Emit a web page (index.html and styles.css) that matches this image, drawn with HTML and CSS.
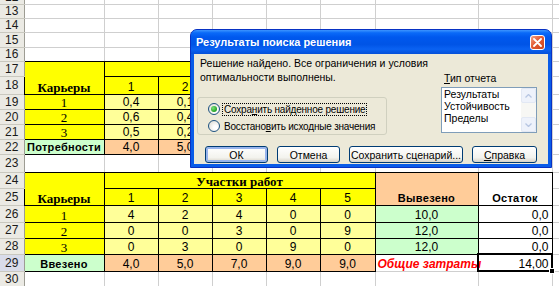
FILE: index.html
```html
<!DOCTYPE html>
<html lang="ru">
<head>
    <meta charset="UTF-8">
    <title>Поиск решения</title>
    <link rel="stylesheet" href="styles.css">
</head>
<body>
<div class="screen">
    <table class="sheet">
        <colgroup>
            <col class="c-hdr"><col class="c-a"><col class="c-n"><col class="c-n"><col class="c-n"><col class="c-n"><col class="c-f"><col class="c-g"><col class="c-h"><col class="c-i">
        </colgroup>
        <tr class="h4"><th><span class="cut">12</span></th><td></td><td></td><td></td><td></td><td></td><td></td><td></td><td></td><td></td></tr>
        <tr class="h14"><th>13</th><td></td><td></td><td></td><td></td><td></td><td></td><td></td><td></td><td></td></tr>
        <tr class="h14"><th>14</th><td></td><td></td><td></td><td></td><td></td><td></td><td></td><td></td><td></td></tr>
        <tr class="h15"><th>15</th><td></td><td></td><td></td><td></td><td></td><td></td><td></td><td></td><td></td></tr>
        <tr class="h14"><th>16</th><td></td><td></td><td></td><td></td><td></td><td></td><td></td><td></td><td></td></tr>
        <tr class="h15"><th>17</th><td class="t yel bs" rowspan="2">Карьеры</td><td class="t yel" colspan="5"></td><td></td><td></td><td></td></tr>
        <tr class="h18"><th>18</th><td class="t yel">1</td><td class="t yel">2</td><td class="t yel"></td><td class="t yel"></td><td class="t yel"></td><td></td><td></td><td></td></tr>
        <tr class="h15"><th>19</th><td class="t yel serif">1</td><td class="t ly">0,4</td><td class="t ly">0,1</td><td class="t ly"></td><td class="t ly"></td><td class="t ly"></td><td></td><td></td><td></td></tr>
        <tr class="h15"><th>20</th><td class="t yel serif">2</td><td class="t ly">0,6</td><td class="t ly">0,4</td><td class="t ly"></td><td class="t ly"></td><td class="t ly"></td><td></td><td></td><td></td></tr>
        <tr class="h15"><th>21</th><td class="t yel serif">3</td><td class="t ly">0,5</td><td class="t ly">0,2</td><td class="t ly"></td><td class="t ly"></td><td class="t ly"></td><td></td><td></td><td></td></tr>
        <tr class="h15"><th>22</th><td class="t grn lab">Потребности</td><td class="t org">4,0</td><td class="t org">5,0</td><td class="t org"></td><td class="t org"></td><td class="t org"></td><td></td><td></td><td></td></tr>
        <tr class="h18"><th>23</th><td></td><td></td><td></td><td></td><td></td><td></td><td></td><td></td><td></td></tr>
        <tr class="h16"><th>24</th><td class="t yel bs" rowspan="2">Карьеры</td><td class="t yel bs" colspan="5">Участки работ</td><td class="t org lab" rowspan="2">Вывезено</td><td class="t lab" rowspan="2">Остаток</td><td></td></tr>
        <tr class="h17"><th>25</th><td class="t yel">1</td><td class="t yel">2</td><td class="t yel">3</td><td class="t yel">4</td><td class="t yel">5</td><td></td></tr>
        <tr class="h17"><th>26</th><td class="t yel serif">1</td><td class="t ly">4</td><td class="t ly">2</td><td class="t ly">4</td><td class="t ly">0</td><td class="t ly">0</td><td class="t grn">10,0</td><td class="t right">0,0</td><td></td></tr>
        <tr class="h16"><th>27</th><td class="t yel serif">2</td><td class="t ly">0</td><td class="t ly">0</td><td class="t ly">3</td><td class="t ly">0</td><td class="t ly">9</td><td class="t grn">12,0</td><td class="t right">0,0</td><td></td></tr>
        <tr class="h16"><th>28</th><td class="t yel serif">3</td><td class="t ly">0</td><td class="t ly">3</td><td class="t ly">0</td><td class="t ly">9</td><td class="t ly">0</td><td class="t grn">12,0</td><td class="t right">0,0</td><td></td></tr>
        <tr class="h17"><th class="sel">29</th><td class="t grn lab">Ввезено</td><td class="t org">4,0</td><td class="t org">5,0</td><td class="t org">7,0</td><td class="t org">9,0</td><td class="t org">9,0</td><td class="total">Общие затраты</td><td class="right active">14,00</td><td></td></tr>
        <tr class="h15 last"><th>30</th><td></td><td></td><td></td><td></td><td></td><td></td><td></td><td></td><td></td></tr>
    </table>

    <div class="dialog">
        <div class="dlg-title">
            <span>Результаты поиска решения</span>
            <span class="dlg-close">
                <svg width="9" height="9" viewBox="0 0 9 9"><path d="M1 1L8 8M8 1L1 8" stroke="#fff" stroke-width="1.8" stroke-linecap="round"/></svg>
            </span>
        </div>
        <div class="dlg-body">
            <div class="dlg-top">
                <div class="dlg-left">
                    <div class="dlg-msg">Решение найдено. Все ограничения и условия<br>оптимальности выполнены.</div>
                    <div class="group">
                        <div class="radio"><span class="dot checked"></span><span class="focus">Сохра<u>н</u>ить найденное решение</span></div>
                        <div class="radio"><span class="dot"></span><span class="rlabel">Восстано<u>в</u>ить исходные значения</span></div>
                    </div>
                </div>
                <div class="dlg-right">
                    <div class="list-label"><u>Т</u>ип отчета</div>
                    <div class="listbox">
                        <div class="list-items">Результаты<br>Устойчивость<br>Пределы</div>
                        <div class="scroll">
                            <span class="sbtn"><svg width="7" height="4" viewBox="0 0 7 4"><path d="M0.5 3.5L3.5 0.5L6.5 3.5" fill="none" stroke="#b7c6e2" stroke-width="1.3"/></svg></span>
                            <span class="sbtn"><svg width="7" height="4" viewBox="0 0 7 4"><path d="M0.5 0.5L3.5 3.5L6.5 0.5" fill="none" stroke="#b7c6e2" stroke-width="1.3"/></svg></span>
                        </div>
                    </div>
                </div>
            </div>
            <div class="dlg-buttons">
                <span class="btn default w63">ОК</span>
                <span class="btn w63">Отмена</span>
                <span class="btn w114">Сохранить сценарий...</span>
                <span class="btn w65"><u>С</u>правка</span>
            </div>
        </div>
    </div>
</div>
</body>
</html>
```

FILE: styles.css
```css
body {
    margin: 0;
    background: #fff;
    font-family: "Liberation Sans", Arial, sans-serif;
}

.screen {
    position: relative;
    width: 559px;
    height: 286px;
    overflow: hidden;
}

/* sheet */
.sheet {
    border-collapse: collapse;
    table-layout: fixed;
    width: 613px;
    font-size: 12px;
}

.sheet col {
    border-right: 1px solid #cfcfcf;
}

.c-hdr { width: 24px; }
.c-a { width: 80px; }
.c-n { width: 54px; }
.c-f { width: 55px; }
.c-g { width: 103px; }
.c-h { width: 74px; }
.c-i { width: 61px; }

.sheet tr {
    border-bottom: 1px solid #cfcfcf;
}

.sheet tr.last {
    border-bottom: 1px solid #6e6e6e;
}

.h4 { height: 4px; }
.h14 { height: 14px; }
.h15 { height: 15px; }
.h16 { height: 16px; }
.h17 { height: 17px; }
.h18 { height: 18px; }

.sheet th {
    padding: 0;
    background: #ebeae4;
    border-right: 1px solid #9d9c93;
    border-bottom: 1px solid #c9c8bf;
    color: #1a1a1a;
    font-weight: normal;
    font-size: 12px;
    line-height: 12px;
    text-align: center;
}

.sheet th.sel {
    background: #d9dcea;
}

.cut {
    display: flex;
    align-items: flex-end;
    justify-content: center;
    height: 3px;
    overflow: hidden;
}

.sheet td {
    padding: 0 2px;
    text-align: center;
    vertical-align: bottom;
    line-height: 13px;
    white-space: nowrap;
}

.t { border: 1px solid #000; }
.yel { background: #ffff00; }
.ly { background: #ffff99; }
.org { background: #ffcc99; }
.grn { background: #ccffcc; }

.serif {
    font-family: "Liberation Serif", "Times New Roman", serif;
    font-size: 13px;
}

.bs {
    font-family: "Liberation Serif", "Times New Roman", serif;
    font-weight: bold;
    font-size: 13px;
}

.lab {
    font-weight: bold;
    font-size: 11px;
    letter-spacing: 0.3px;
}

.sheet td.right {
    text-align: right;
    padding-right: 3px;
}

.total {
    color: #f00;
    font-weight: bold;
    font-style: italic;
}

.active {
    position: relative;
    outline: 2px solid #000;
    outline-offset: -1px;
}

.active::after {
    content: "";
    position: absolute;
    right: -3px;
    bottom: -3px;
    width: 4px;
    height: 4px;
    background: #000;
    border: 1px solid #fff;
}

/* dialog */
.dialog {
    position: absolute;
    left: 190px;
    top: 29px;
    width: 362px;
    height: 139px;
    box-sizing: border-box;
    display: flex;
    flex-direction: column;
    padding: 0 3px 3px;
    background: #0a5ce8;
    border: 1px solid #0832c4;
    border-radius: 7px 7px 0 0;
    font-size: 10.5px;
    color: #000;
}

.dlg-title {
    flex: none;
    height: 24px;
    margin: 0 -3px;
    padding: 0 6px 0 5px;
    display: flex;
    align-items: center;
    justify-content: space-between;
    border-radius: 6px 6px 0 0;
    background: linear-gradient(#3d95ff 0%, #0a6af8 12%, #0058ee 30%, #0054e6 60%, #0a62f2 80%, #0550d8 100%);
    color: #fff;
    font-weight: bold;
    font-size: 11px;
}

.dlg-close {
    width: 15px;
    height: 15px;
    box-sizing: border-box;
    display: flex;
    align-items: center;
    justify-content: center;
    border: 1px solid #fff;
    border-radius: 3px;
    background: linear-gradient(135deg, #f2a58a, #e35a32 45%, #c9461f);
}

.dlg-body {
    flex: 1;
    padding: 2px 0 0 3px;
    background: #ece9d8;
}

.dlg-top {
    display: flex;
}

.dlg-left {
    width: 190px;
    flex: none;
}

.dlg-msg {
    margin-left: 3px;
    line-height: 14px;
    white-space: nowrap;
}

.group {
    margin-top: 13px;
    height: 38px;
    box-sizing: border-box;
    padding: 4px 0 0 10px;
    border: 1px solid #d0d0bf;
    border-radius: 3px;
    font-size: 10px;
    letter-spacing: -0.2px;
}

.radio {
    display: flex;
    align-items: center;
    gap: 2px;
    height: 14px;
    white-space: nowrap;
}

.radio + .radio {
    margin-top: 3px;
}

.dot {
    position: relative;
    flex: none;
    width: 12px;
    height: 12px;
    box-sizing: border-box;
    border: 1px solid #1c5180;
    border-radius: 50%;
    background: radial-gradient(circle at 65% 65%, #fff 20%, #dcdbd2 90%);
}

.dot.checked::after {
    content: "";
    position: absolute;
    left: 2px;
    top: 2px;
    width: 6px;
    height: 6px;
    border-radius: 50%;
    background: radial-gradient(circle at 35% 35%, #7ce07c, #21a121 70%);
}

.focus {
    padding: 0 1px;
    border: 1px dotted #000;
}

.rlabel {
    padding: 0 2px;
}

.dlg-right {
    margin-left: 54px;
    margin-top: 15px;
}

.list-label {
    margin-left: 3px;
    line-height: 14px;
}

.listbox {
    margin-top: 2px;
    width: 96px;
    height: 46px;
    box-sizing: border-box;
    display: flex;
    border: 1px solid #7f9db9;
    background: #fff;
}

.list-items {
    flex: 1;
    padding-left: 2px;
    line-height: 12px;
}

.scroll {
    width: 15px;
    display: flex;
    flex-direction: column;
    justify-content: space-between;
    background: #f7f7f4;
}

.sbtn {
    height: 15px;
    box-sizing: border-box;
    display: flex;
    align-items: center;
    justify-content: center;
    border: 1px solid #e2e8f4;
    border-radius: 2px;
    background: #eef2fb;
}

.dlg-buttons {
    display: flex;
    gap: 9px;
    margin-top: 11px;
    padding-left: 8px;
}

.btn {
    height: 17px;
    box-sizing: border-box;
    display: flex;
    align-items: center;
    justify-content: center;
    border: 1px solid #003c74;
    border-radius: 3px;
    background: linear-gradient(#ffffff, #f3f3ee 70%, #d8d3c8);
    white-space: nowrap;
}

.btn.default {
    box-shadow: inset 0 0 0 2px #98b4ec;
}

.w63 { width: 63px; }
.w65 { width: 65px; }
.w114 { width: 114px; }
```
